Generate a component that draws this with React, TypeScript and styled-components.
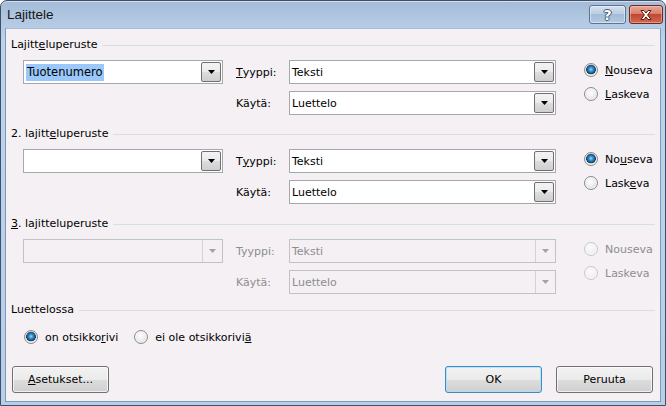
import React from "react";
import styled, { createGlobalStyle, css } from "styled-components";

const GlobalStyle = createGlobalStyle`
  html, body { margin: 0; padding: 0; background: #ffffff; }
  body {
    font-family: "DejaVu Sans", Tahoma, Verdana, sans-serif;
    font-size: 11px;
    color: #000;
  }
`;

const Window = styled.div`
  box-sizing: border-box;
  width: 666px;
  height: 406px;
  display: flex;
  flex-direction: column;
  padding: 0 4px 3px 4px;
  border: 1px solid #3e5069;
  border-radius: 7px 7px 0 0;
  background: linear-gradient(to bottom, #a3bbd7 0px, #b3c9e3 20px, #bdd3ec 40px, #b8cfe9 100%);
  box-shadow: inset 0 1px 0 rgba(255, 255, 255, 0.55);
`;

const TitleBar = styled.div`
  height: 27px;
  display: flex;
  align-items: flex-start;
  justify-content: space-between;
  margin-right: -2px;
`;

const Title = styled.span`
  font-family: "Liberation Sans", Arial, sans-serif;
  font-size: 13.5px;
  color: #151515;
  padding: 6px 0 0 2px;
`;

const CaptionButtons = styled.div`
  display: flex;
  gap: 3px;
  margin-top: 4px;
`;

const CaptionButton = styled.div<{ $variant: "help" | "close" }>`
  box-sizing: border-box;
  height: 19px;
  border-radius: 3px;
  display: flex;
  align-items: center;
  justify-content: center;
  ${(p) =>
    p.$variant === "help"
      ? css`
          width: 37px;
          border: 1px solid #5c7494;
          background: linear-gradient(to bottom, #d3e0ee 0%, #bccee3 45%, #a5bcd6 50%, #b4c9e2 100%);
          box-shadow: inset 0 0 0 1px rgba(255, 255, 255, 0.45);
        `
      : css`
          width: 34px;
          border: 1px solid #6b2a22;
          background: linear-gradient(to bottom, #e8a896 0%, #d7806d 45%, #c54532 50%, #cf6a52 100%);
          box-shadow: inset 0 0 0 1px rgba(255, 210, 200, 0.45);
        `}
`;

const HelpGlyph = styled.span`
  font-family: "DejaVu Sans", sans-serif;
  font-weight: bold;
  font-size: 14px;
  color: #ffffff;
  text-shadow: 0 0 1px #34455c, 1px 0 0 #4d6280, -1px 0 0 #4d6280, 0 1px 0 #4d6280, 0 -1px 0 #4d6280;
`;

const Client = styled.div`
  flex: 1;
  box-sizing: border-box;
  display: flex;
  flex-direction: column;
  background: #f4f0f4;
  border: 1px solid #7f98b6;
  border-top-color: #a7bbd3;
  padding: 8px 5px 0 5px;
`;

const Section = styled.section<{ $gap: number }>`
  margin-top: ${(p) => p.$gap}px;
`;

const GroupHeading = styled.div`
  display: flex;
  align-items: center;
  gap: 5px;
  height: 16px;
  line-height: 16px;
  white-space: nowrap;
  &::after {
    content: "";
    flex: 1;
    height: 1px;
    background: #d5dee6;
  }
`;

const SortGrid = styled.div`
  display: grid;
  grid-template-columns: 213px 53px 295px auto;
  grid-template-rows: 24px 24px;
  row-gap: 7px;
  margin: 7px 0 0 12px;
`;

const Combo = styled.div<{ $width: number; $disabled?: boolean }>`
  box-sizing: border-box;
  width: ${(p) => p.$width}px;
  height: 24px;
  display: flex;
  align-items: stretch;
  border: 1px solid ${(p) => (p.$disabled ? "#c2c2c4" : "#a6a8ae")};
  background: ${(p) => (p.$disabled ? "#f4f0f4" : "#ffffff")};
  color: ${(p) => (p.$disabled ? "#8e8e8e" : "#000")};
`;

const ComboText = styled.div`
  flex: 1;
  display: flex;
  align-items: center;
  padding-left: 2px;
  overflow: hidden;
  white-space: nowrap;
`;

const Selected = styled.span`
  background: #9ac8fa;
  font-size: 11.5px;
  line-height: 17px;
  padding: 0 1px;
`;

const DropButton = styled.div<{ $disabled?: boolean }>`
  box-sizing: border-box;
  width: 20px;
  display: flex;
  align-items: center;
  justify-content: center;
  ${(p) =>
    p.$disabled
      ? css`
          border-left: 1px solid #d4d1d6;
        `
      : css`
          margin: 1px;
          border: 1px solid #707070;
          border-radius: 2px;
          background: linear-gradient(to bottom, #f3f3f3 0%, #ebebeb 50%, #dddddd 51%, #cfcfcf 100%);
        `}
`;

const FieldLabel = styled.div<{ $disabled?: boolean }>`
  display: flex;
  align-items: center;
  color: ${(p) => (p.$disabled ? "#8e8e8e" : "#000")};
`;

const RadioStack = styled.div`
  grid-column: 4;
  grid-row: 1 / span 2;
  display: flex;
  flex-direction: column;
  gap: 10px;
  padding-top: 3px;
`;

const RadioRow = styled.label<{ $disabled?: boolean }>`
  display: flex;
  align-items: center;
  gap: 7px;
  height: 14px;
  color: ${(p) => (p.$disabled ? "#8e8e8e" : "#000")};
`;

const RadioDot = styled.span<{ $checked?: boolean; $disabled?: boolean }>`
  box-sizing: border-box;
  width: 14px;
  height: 14px;
  border-radius: 50%;
  flex: none;
  border: 1px solid ${(p) => (p.$disabled ? "#c8c8c8" : "#8b8c8f")};
  background: ${(p) =>
    p.$disabled
      ? "radial-gradient(circle at 45% 40%, #fbfbfb 0%, #f0f0f0 60%, #e4e4e4 100%)"
      : p.$checked
      ? "radial-gradient(circle at 50% 45%, #9fdcf8 0%, #3f9ad2 20%, #1a5c93 42%, #0f3558 52%, #d9d9d9 58%, #f4f4f4 100%)"
      : "radial-gradient(circle at 45% 40%, #ffffff 0%, #f0f0f0 40%, #d0d0d0 100%)"};
  box-shadow: inset 0 0 0 1px rgba(255, 255, 255, 0.6);
`;

const HeaderRadios = styled.div`
  display: flex;
  gap: 16px;
  margin: 12px 0 0 13px;
`;

const Footer = styled.div`
  display: flex;
  justify-content: space-between;
  margin: 22px 2px 0 1px;
`;

const ButtonGroup = styled.div`
  display: flex;
  gap: 14px;
`;

const PushButton = styled.button<{ $default?: boolean }>`
  box-sizing: border-box;
  width: 97px;
  height: 27px;
  padding: 0;
  font: inherit;
  color: #000;
  border-radius: 3px;
  border: 1px solid ${(p) => (p.$default ? "#3d8bc4" : "#707070")};
  background: linear-gradient(to bottom, #f2f2f2 0%, #ebebeb 50%, #dddddd 51%, #cfcfcf 100%);
  box-shadow: inset 0 0 0 1px ${(p) => (p.$default ? "rgba(170, 225, 250, 0.8)" : "rgba(255, 255, 255, 0.7)")};
`;

const Arrow = ({ color }: { color: string }) => (
  <svg width="7" height="4" viewBox="0 0 7 4">
    <path d="M0 0h7L3.5 4z" fill={color} />
  </svg>
);

const CloseIcon = () => (
  <svg width="14" height="12" viewBox="0 0 14 12">
    <path
      d="M2 1.5h3l2 2.6 2-2.6h3L8.6 6 12 10.5H9L7 7.9 5 10.5H2L5.4 6z"
      fill="#ffffff"
      stroke="#5b1d14"
      strokeWidth="1"
      strokeLinejoin="round"
    />
  </svg>
);

type SortKey = {
  title: React.ReactNode;
  value?: React.ReactNode;
  typeLabel: React.ReactNode;
  up: React.ReactNode;
  down: React.ReactNode;
  disabled?: boolean;
  gap: number;
};

const keys: SortKey[] = [
  {
    title: <>Lajitt<u>e</u>luperuste</>,
    value: <Selected>Tuotenumero</Selected>,
    typeLabel: <><u>T</u>yyppi:</>,
    up: <><u>N</u>ouseva</>,
    down: <><u>L</u>askeva</>,
    gap: 0,
  },
  {
    title: <>2. lajitt<u>e</u>luperuste</>,
    typeLabel: <>T<u>y</u>yppi:</>,
    up: <>No<u>u</u>seva</>,
    down: <>Lask<u>e</u>va</>,
    gap: 11,
  },
  {
    title: <><u>3</u>. lajitteluperuste</>,
    typeLabel: <>Tyyppi:</>,
    up: <>Nouseva</>,
    down: <>Laskeva</>,
    disabled: true,
    gap: 12,
  },
];

const SortSection = ({ k }: { k: SortKey }) => {
  const arrow = k.disabled ? "#a3a3a3" : "#000";
  return (
    <Section $gap={k.gap}>
      <GroupHeading>
        <span>{k.title}</span>
      </GroupHeading>
      <SortGrid>
        <Combo $width={200} $disabled={k.disabled}>
          <ComboText>{k.value}</ComboText>
          <DropButton $disabled={k.disabled}>
            <Arrow color={arrow} />
          </DropButton>
        </Combo>
        <FieldLabel $disabled={k.disabled}>{k.typeLabel}</FieldLabel>
        <Combo $width={267} $disabled={k.disabled}>
          <ComboText>Teksti</ComboText>
          <DropButton $disabled={k.disabled}>
            <Arrow color={arrow} />
          </DropButton>
        </Combo>
        <RadioStack>
          <RadioRow $disabled={k.disabled}>
            <RadioDot $checked $disabled={k.disabled} />
            <span>{k.up}</span>
          </RadioRow>
          <RadioRow $disabled={k.disabled}>
            <RadioDot $disabled={k.disabled} />
            <span>{k.down}</span>
          </RadioRow>
        </RadioStack>
        <FieldLabel $disabled={k.disabled} style={{ gridColumn: 2, gridRow: 2 }}>
          Käytä:
        </FieldLabel>
        <div style={{ gridColumn: 3, gridRow: 2 }}>
          <Combo $width={267} $disabled={k.disabled}>
            <ComboText>Luettelo</ComboText>
            <DropButton $disabled={k.disabled}>
              <Arrow color={arrow} />
            </DropButton>
          </Combo>
        </div>
      </SortGrid>
    </Section>
  );
};

export default function App() {
  return (
    <>
      <GlobalStyle />
      <Window>
        <TitleBar>
          <Title>Lajittele</Title>
          <CaptionButtons>
            <CaptionButton $variant="help">
              <HelpGlyph>?</HelpGlyph>
            </CaptionButton>
            <CaptionButton $variant="close">
              <CloseIcon />
            </CaptionButton>
          </CaptionButtons>
        </TitleBar>
        <Client>
          {keys.map((k, i) => (
            <SortSection key={i} k={k} />
          ))}
          <Section $gap={8}>
            <GroupHeading>
              <span>Luettelossa</span>
            </GroupHeading>
            <HeaderRadios>
              <RadioRow>
                <RadioDot $checked />
                <span>
                  on otsikko<u>r</u>ivi
                </span>
              </RadioRow>
              <RadioRow>
                <RadioDot />
                <span>
                  ei ole otsikkorivi<u>ä</u>
                </span>
              </RadioRow>
            </HeaderRadios>
          </Section>
          <Footer>
            <PushButton>
              <u>A</u>setukset...
            </PushButton>
            <ButtonGroup>
              <PushButton $default>OK</PushButton>
              <PushButton>Peruuta</PushButton>
            </ButtonGroup>
          </Footer>
        </Client>
      </Window>
    </>
  );
}
